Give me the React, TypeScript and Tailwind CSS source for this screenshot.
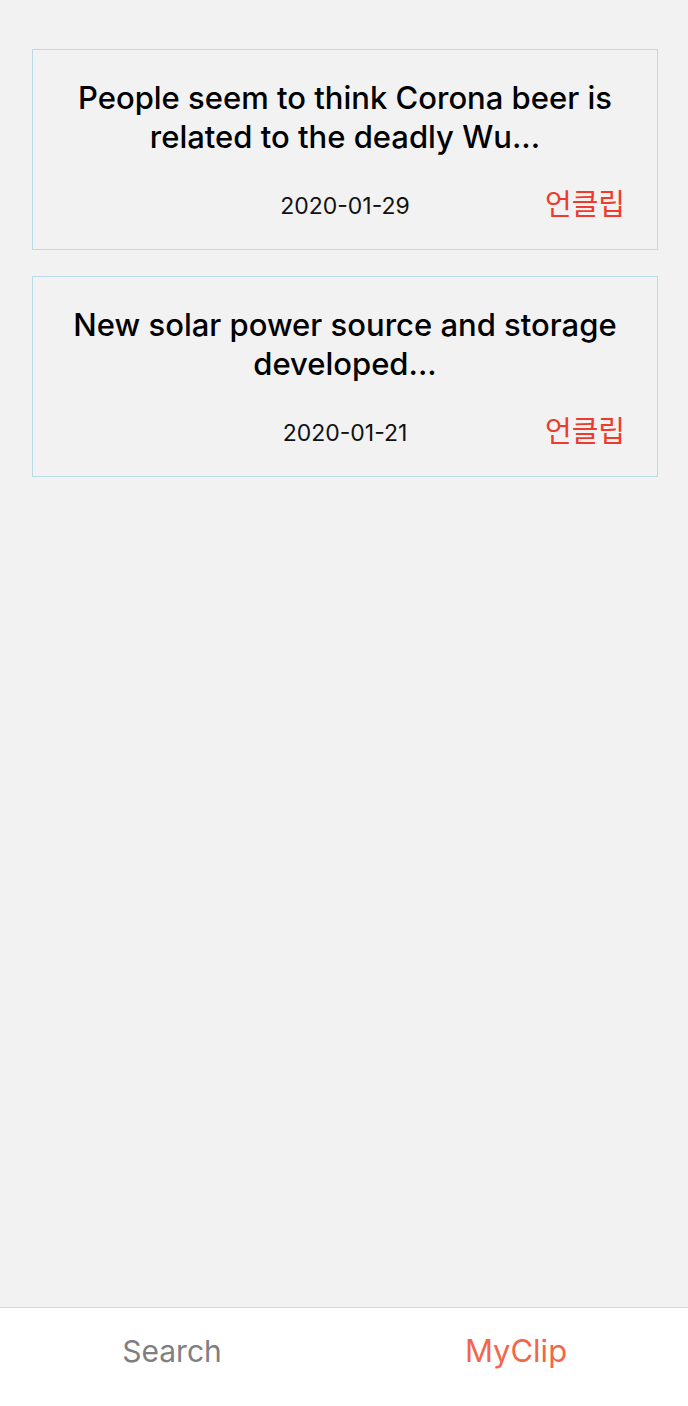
import React from "react";

const clips = [
  { title: "People seem to think Corona beer is related to the deadly Wu...", date: "2020-01-29" },
  { title: "New solar power source and storage developed...", date: "2020-01-21" },
];

function ClipCard({ title, date }: { title: string; date: string }) {
  return (
    <div className="border border-[#b9dbe8] px-[38px] pt-[28px] pb-[29px]">
      <p className="text-center text-[31px] font-medium leading-[39px] text-black">{title}</p>
      <div className="relative mt-[34px] flex h-[30px] items-center justify-center">
        <span className="pt-[3px] text-[23px] text-[#111]">{date}</span>
        <span
          className="absolute right-[-6px] top-[-9px] text-[29px] text-[#ef3b2d]"
          style={{ fontFamily: '"Noto Sans CJK KR", sans-serif' }}
        >
          언클립
        </span>
      </div>
    </div>
  );
}

export default function App() {
  return (
    <div className="flex h-[1406px] w-[688px] flex-col bg-[#f2f2f2]" style={{ fontFamily: "Inter, 'Noto Sans', sans-serif" }}>
      <main className="flex flex-1 flex-col gap-[26px] pl-[32px] pr-[30px] pt-[49px]">
        {clips.map((c) => (
          <ClipCard key={c.date} title={c.title} date={c.date} />
        ))}
      </main>
      <nav className="grid h-[99px] grid-cols-2 border-t border-[#d6d6d6] bg-white pb-[12px]">
        <div className="flex items-center justify-center text-[30px] text-[#7f7f7f]">Search</div>
        <div className="flex items-center justify-center text-[31px] text-[#f2674b]">MyClip</div>
      </nav>
    </div>
  );
}
